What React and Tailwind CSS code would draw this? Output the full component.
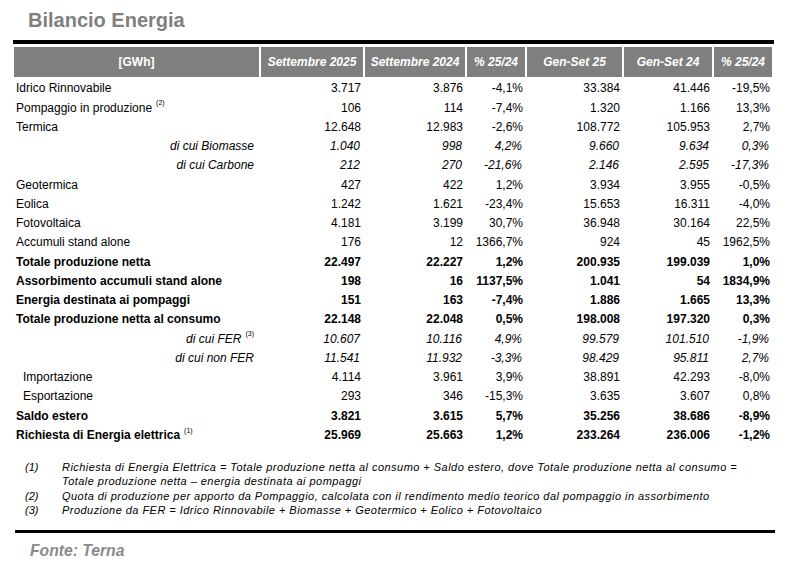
import React from 'react';

const cols = ['Settembre 2025', 'Settembre 2024', '% 25/24', 'Gen-Set 25', 'Gen-Set 24', '% 25/24'];

const rows = [
  { label: 'Idrico Rinnovabile', v: ['3.717', '3.876', '-4,1%', '33.384', '41.446', '-19,5%'] },
  { label: 'Pompaggio in produzione', sup: '(2)', v: ['106', '114', '-7,4%', '1.320', '1.166', '13,3%'] },
  { label: 'Termica', v: ['12.648', '12.983', '-2,6%', '108.772', '105.953', '2,7%'] },
  { label: 'di cui Biomasse', sub: true, v: ['1.040', '998', '4,2%', '9.660', '9.634', '0,3%'] },
  { label: 'di cui Carbone', sub: true, v: ['212', '270', '-21,6%', '2.146', '2.595', '-17,3%'] },
  { label: 'Geotermica', v: ['427', '422', '1,2%', '3.934', '3.955', '-0,5%'] },
  { label: 'Eolica', v: ['1.242', '1.621', '-23,4%', '15.653', '16.311', '-4,0%'] },
  { label: 'Fotovoltaica', v: ['4.181', '3.199', '30,7%', '36.948', '30.164', '22,5%'] },
  { label: 'Accumuli stand alone', v: ['176', '12', '1366,7%', '924', '45', '1962,5%'] },
  { label: 'Totale produzione netta', bold: true, v: ['22.497', '22.227', '1,2%', '200.935', '199.039', '1,0%'] },
  { label: 'Assorbimento accumuli stand alone', bold: true, v: ['198', '16', '1137,5%', '1.041', '54', '1834,9%'] },
  { label: 'Energia destinata ai pompaggi', bold: true, v: ['151', '163', '-7,4%', '1.886', '1.665', '13,3%'] },
  { label: 'Totale produzione netta al consumo', bold: true, v: ['22.148', '22.048', '0,5%', '198.008', '197.320', '0,3%'] },
  { label: 'di cui FER', sup: '(3)', sub: true, v: ['10.607', '10.116', '4,9%', '99.579', '101.510', '-1,9%'] },
  { label: 'di cui non FER', sub: true, v: ['11.541', '11.932', '-3,3%', '98.429', '95.811', '2,7%'] },
  { label: 'Importazione', indent: true, v: ['4.114', '3.961', '3,9%', '38.891', '42.293', '-8,0%'] },
  { label: 'Esportazione', indent: true, v: ['293', '346', '-15,3%', '3.635', '3.607', '0,8%'] },
  { label: 'Saldo estero', bold: true, v: ['3.821', '3.615', '5,7%', '35.256', '38.686', '-8,9%'] },
  { label: 'Richiesta di Energia elettrica', sup: '(1)', bold: true, v: ['25.969', '25.663', '1,2%', '233.264', '236.006', '-1,2%'] },
];

const notes = [
  ['(1)', 'Richiesta di Energia Elettrica = Totale produzione netta al consumo + Saldo estero, dove Totale produzione netta al consumo =', 'Totale produzione netta – energia destinata ai pompaggi'],
  ['(2)', 'Quota di produzione per apporto da Pompaggio, calcolata con il rendimento medio teorico dal pompaggio in assorbimento'],
  ['(3)', 'Produzione da FER = Idrico Rinnovabile + Biomasse + Geotermico + Eolico + Fotovoltaico'],
];

const grid = 'grid grid-cols-[245px_104px_102px_60px_97px_90px_60px]';

const Sup = ({ children }) => (
  <span className="relative -top-[4px] ml-[4px] text-[7px] font-normal not-italic">{children}</span>
);

const Row = ({ row }) => {
  let labelCls = 'pl-[2px]';
  if (row.sub) labelCls = 'justify-end pr-[5px] italic';
  if (row.indent) labelCls = 'pl-[9px]';
  return (
    <div className={`${grid} h-[19.26px] text-[12px] ${row.bold ? 'font-bold' : ''}`}>
      <div className={`flex items-center whitespace-nowrap ${labelCls}`}>
        {row.label}
        {row.sup && <Sup>{row.sup}</Sup>}
      </div>
      {row.v.map((val, i) => (
        <div key={i} className={`flex items-center justify-end ${row.sub ? 'italic pr-[3px]' : 'pr-[2px]'}`}>
          {val}
        </div>
      ))}
    </div>
  );
};

export default function App() {
  return (
    <div className="w-[786px] h-[571px] bg-white text-black font-['Liberation_Sans',Arial,sans-serif] overflow-hidden">
      <div className="pl-[28px] pt-[9px] text-[20px] leading-[23px] font-bold text-[#7f7f7f]">Bilancio Energia</div>
      <div className="ml-[13px] mt-[8px] w-[761px] h-[4px] bg-black" />

      <div className="ml-[14px] mt-[3px] w-[758px]">
        <div className={`${grid} h-[30px] bg-[#7f7f7f] text-white text-[12px] font-bold`}>
          <div className="flex items-center justify-center">[GWh]</div>
          {cols.map((c, i) => (
            <div key={i} className="flex items-center justify-center italic border-l-2 border-white">
              {c}
            </div>
          ))}
        </div>
        <div className="pt-[1.7px]">
          {rows.map((r, i) => (
            <Row key={i} row={r} />
          ))}
        </div>
      </div>

      <div className="mt-[15.5px] ml-[25px] text-[11px] leading-[14.3px] italic">
        {notes.map(([n, ...lines]) => (
          <div key={n} className="flex">
            <div className="w-[37px] shrink-0">{n}</div>
            <div className="tracking-[0.46px]">
              {lines.map((l, j) => (
                <div key={j} className="whitespace-nowrap">{l}</div>
              ))}
            </div>
          </div>
        ))}
      </div>

      <div className="ml-[15px] mt-[13px] w-[760px] h-[3px] bg-black" />
      <div className="pl-[30px] pt-[9px] text-[15.7px] leading-[18px] font-bold italic text-[#8a8a8a]">Fonte: Terna</div>
    </div>
  );
}
